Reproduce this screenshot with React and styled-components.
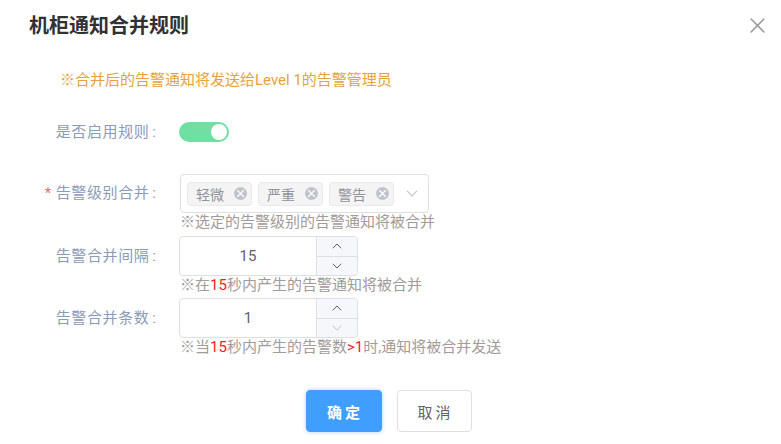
import React from "react";
import styled, { createGlobalStyle } from "styled-components";

const Global = createGlobalStyle`
  html, body { margin: 0; padding: 0; background: #fff; }
  body { font-family: Roboto, "Noto Sans CJK SC", sans-serif; }
  * { box-sizing: border-box; }
`;

const Dialog = styled.div`
  width: 781px;
  height: 444px;
  background: #fff;
  overflow: hidden;
`;

const Header = styled.div`
  display: flex;
  justify-content: space-between;
  align-items: center;
  padding: 14px 16px 0 29px;
  height: 39px;
`;

const Title = styled.div`
  font-size: 20px;
  line-height: 25px;
  font-weight: 700;
  color: #303133;
`;

const CloseBtn = styled.button`
  border: 0;
  background: transparent;
  padding: 0;
  width: 16px;
  height: 16px;
  display: flex;
  align-items: center;
  justify-content: center;
  cursor: pointer;
  margin-top: -2px;
`;

const Note = styled.div`
  margin-top: 31px;
  padding-left: 60px;
  font-size: 15px;
  line-height: 20px;
  color: #e6a23c;
`;

const Item = styled.div`
  display: grid;
  grid-template-columns: 179px auto;
  margin-top: ${(p) => p.$mt}px;
`;

const Label = styled.div`
  text-align: right;
  padding-right: 23px;
  font-size: 15px;
  letter-spacing: 0.6px;
  line-height: ${(p) => p.$h}px;
  color: #8c9bb6;
  white-space: nowrap;
`;

const Colon = styled.span`
  margin-left: 3px;
  letter-spacing: 0;
`;

const Star = styled.span`
  color: #f56c6c;
  margin-right: 4px;
`;

const Control = styled.div`
  display: flex;
  flex-direction: column;
  align-items: flex-start;
`;

const ControlLine = styled.div`
  height: ${(p) => p.$h}px;
  display: flex;
  align-items: center;
`;

const Hint = styled.div`
  font-size: 15px;
  line-height: 18px;
  color: #a39a9a;
  white-space: nowrap;
  margin-left: 1px;
`;

const Red = styled.span`
  color: #f21d1d;
`;

const Switch = styled.div`
  width: 50px;
  height: 20px;
  border-radius: 10px;
  background: #70e0a2;
  display: flex;
  align-items: center;
  justify-content: flex-end;
  padding-right: 2px;
`;

const Knob = styled.div`
  width: 16px;
  height: 16px;
  border-radius: 50%;
  background: #fff;
`;

const SelectBox = styled.div`
  width: 249px;
  height: 39px;
  border: 1px solid #dcdfe6;
  border-radius: 4px;
  display: flex;
  align-items: center;
  padding: 0 10px 0 6px;
  gap: 6px;
  margin-left: 1px;
`;

const Tag = styled.div`
  height: 24px;
  display: flex;
  align-items: center;
  padding: 0 4px 0 8px;
  background: #f4f4f5;
  border: 1px solid #e9e9eb;
  border-radius: 4px;
  font-size: 14px;
  color: #909399;
  gap: 10px;
`;

const TagClose = styled.span`
  width: 13px;
  height: 13px;
  border-radius: 50%;
  background: #c0c4cc;
  display: flex;
  align-items: center;
  justify-content: center;
`;

const Arrow = styled.span`
  margin-left: auto;
  display: flex;
  align-items: center;
`;

const NumberBox = styled.div`
  width: 179px;
  height: 40px;
  border: 1px solid #dcdfe6;
  border-radius: 4px;
  display: flex;
  overflow: hidden;
`;

const NumberValue = styled.div`
  flex: 1;
  display: flex;
  align-items: center;
  justify-content: center;
  font-size: 15px;
  color: #606266;
`;

const Steps = styled.div`
  width: 41px;
  display: flex;
  flex-direction: column;
  border-left: 1px solid #dcdfe6;
  background: #f5f7fa;
`;

const Step = styled.div`
  flex: 1;
  display: flex;
  align-items: center;
  justify-content: center;
  & + & {
    border-top: 1px solid #dcdfe6;
  }
`;

const Footer = styled.div`
  display: flex;
  justify-content: center;
  gap: 15px;
  margin-top: 34px;
  padding-right: 4px;
`;

const Button = styled.button`
  width: ${(p) => (p.$primary ? 76 : 75)}px;
  height: 42px;
  border-radius: 4px;
  font-family: inherit;
  font-size: 15px;
  font-weight: ${(p) => (p.$primary ? 700 : 400)};
  letter-spacing: 3px;
  padding: 0 0 0 3px;
  border: 1px solid ${(p) => (p.$primary ? "#409eff" : "#dcdfe6")};
  background: ${(p) => (p.$primary ? "#409eff" : "#fff")};
  color: ${(p) => (p.$primary ? "#fff" : "#606266")};
  box-shadow: ${(p) => (p.$primary ? "0 0 4px rgba(64,158,255,0.45)" : "none")};
  cursor: pointer;
`;

const Chevron = ({ up, color = "#606266", w = 10 }) => (
  <svg width={w} height={w / 2 + 1} viewBox="0 0 10 6" fill="none">
    <path
      d={up ? "M1 5 L5 1 L9 5" : "M1 1 L5 5 L9 1"}
      stroke={color}
      strokeWidth="1"
      strokeLinecap="round"
      strokeLinejoin="round"
    />
  </svg>
);

const XIcon = ({ size, color, sw }) => (
  <svg width={size} height={size} viewBox="0 0 14 14" fill="none">
    <path d="M1 1 L13 13 M13 1 L1 13" stroke={color} strokeWidth={sw} strokeLinecap="round" />
  </svg>
);

const TagItem = ({ children }) => (
  <Tag>
    {children}
    <TagClose>
      <XIcon size={7} color="#fff" sw={2.4} />
    </TagClose>
  </Tag>
);

const NumberInput = ({ value, minDisabled }) => (
  <NumberBox>
    <NumberValue>{value}</NumberValue>
    <Steps>
      <Step>
        <Chevron up />
      </Step>
      <Step>
        <Chevron color={minDisabled ? "#c0c4cc" : "#606266"} />
      </Step>
    </Steps>
  </NumberBox>
);

export default function App() {
  return (
    <Dialog>
      <Global />
      <Header>
        <Title>机柜通知合并规则</Title>
        <CloseBtn aria-label="关闭">
          <XIcon size={15} color="#909399" sw={1.3} />
        </CloseBtn>
      </Header>
      <Note>※合并后的告警通知将发送给Level 1的告警管理员</Note>

      <Item $mt={22}>
        <Label $h={40}>
          是否启用规则<Colon>:</Colon>
        </Label>
        <Control>
          <ControlLine $h={40}>
            <Switch>
              <Knob />
            </Switch>
          </ControlLine>
        </Control>
      </Item>

      <Item $mt={22}>
        <Label $h={39}>
          <Star>*</Star>告警级别合并<Colon>:</Colon>
        </Label>
        <Control>
          <SelectBox>
            <TagItem>轻微</TagItem>
            <TagItem>严重</TagItem>
            <TagItem>警告</TagItem>
            <Arrow>
              <Chevron color="#c0c4cc" w={12} />
            </Arrow>
          </SelectBox>
          <Hint>※选定的告警级别的告警通知将被合并</Hint>
        </Control>
      </Item>

      <Item $mt={5}>
        <Label $h={40}>
          告警合并间隔<Colon>:</Colon>
        </Label>
        <Control>
          <NumberInput value="15" />
          <Hint>
            ※在<Red>15</Red>秒内产生的告警通知将被合并
          </Hint>
        </Control>
      </Item>

      <Item $mt={4}>
        <Label $h={40}>
          告警合并条数<Colon>:</Colon>
        </Label>
        <Control>
          <NumberInput value="1" minDisabled />
          <Hint>
            ※当<Red>15</Red>秒内产生的告警数<Red>&gt;1</Red>时,通知将被合并发送
          </Hint>
        </Control>
      </Item>

      <Footer>
        <Button $primary>确定</Button>
        <Button>取消</Button>
      </Footer>
    </Dialog>
  );
}
